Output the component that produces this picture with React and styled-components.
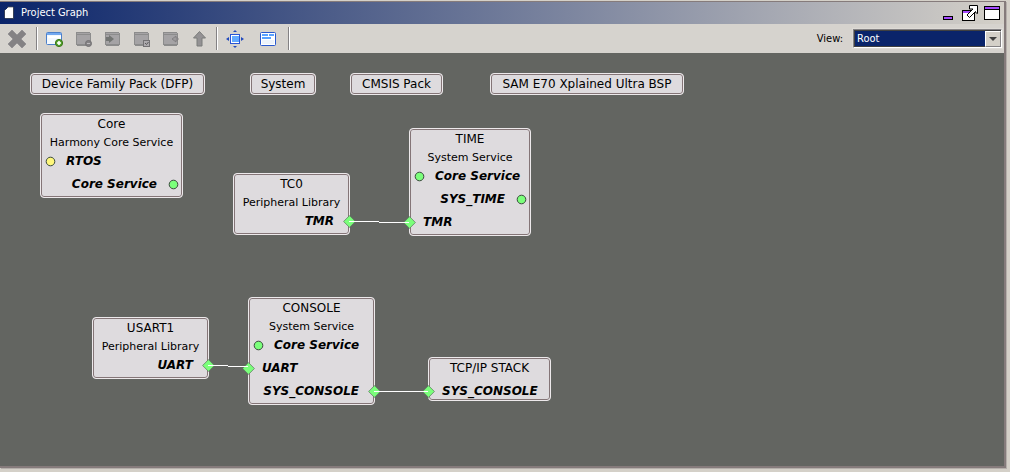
import React from "react";
import styled, { createGlobalStyle } from "styled-components";

const Global = createGlobalStyle`
  * { box-sizing: border-box; }
  body { margin: 0; background: #d4d0c8; }
`;

const ui = `"DejaVu Sans Condensed", "Liberation Sans", sans-serif`;
const node = `"DejaVu Sans", "Liberation Sans", sans-serif`;

const Frame = styled.main`
  display: flex;
  flex-direction: column;
  min-height: 100vh;
  padding: 1px 4px 4px 0;
  background: #d4d0c8;
  font-family: ${ui};
`;

const Panel = styled.section`
  flex: 1;
  display: flex;
  flex-direction: column;
  border: solid #857b7b;
  border-width: 1px 2px 2px 0;
  box-shadow: 1px 1px 0 #b5afab;
`;

const TitleBar = styled.header`
  display: flex;
  align-items: center;
  height: 22px;
  padding: 0 4px;
  background: linear-gradient(90deg, #0a246a, #d4d0c8);
`;

const Title = styled.h1`
  flex: 1;
  margin: 0 0 0 7px;
  color: #fff;
  font-size: 11px;
  font-weight: 400;
  line-height: 20px;
`;

const WindowButton = styled.button`
  display: flex;
  margin-left: ${(p) => p.$gap || 0}px;
  padding: 0;
  border: 0;
  background: none;
`;

const ToolBar = styled.div`
  display: flex;
  align-items: center;
  height: 29px;
  background: #d6d3ce;
`;

const ToolButton = styled.button`
  display: flex;
  align-items: center;
  justify-content: center;
  width: ${(p) => p.$width || 29}px;
  height: 25px;
  padding: 0;
  border: 0;
  background: none;
`;

const Separator = styled.span`
  width: 2px;
  height: 23px;
  margin: 0 2px;
  border-left: 1px solid #848284;
  border-right: 1px solid #fff;
`;

const ViewLabel = styled.label`
  margin-left: auto;
  margin-right: 10px;
  color: #000;
  font-size: 11px;
`;

const SelectBox = styled.div`
  display: flex;
  width: 149px;
  height: 19px;
  margin-right: 2px;
  padding: 1px;
  border: 1px solid;
  border-color: #848284 #fff #fff #848284;
  background: #fff;
  outline: 1px solid #dedbd6;
  position: relative;
`;

const ViewSelect = styled.select`
  flex: 1;
  appearance: none;
  padding: 0 2px;
  border: 0;
  border-radius: 0;
  outline: 1px solid #404040;
  background: #0a246a;
  color: #fff;
  font-family: ${ui};
  font-size: 11px;
`;

const Arrow = styled.span`
  position: absolute;
  right: 0;
  top: 1px;
  bottom: 0;
  width: 16px;
  display: flex;
  align-items: center;
  justify-content: center;
  border: 1px solid;
  border-color: #fff #848284 #848284 #fff;
  background: #d4d0c8;
  pointer-events: none;
`;

const Canvas = styled.div`
  position: relative;
  flex: 1;
  min-height: 412px;
  background: #636561;
  font-family: ${node};
  color: #000;
`;

const Wires = styled.svg`
  position: absolute;
  inset: 0;
  z-index: 2;
  width: 100%;
  height: 100%;
  pointer-events: none;
`;

const Box = styled.article`
  position: absolute;
  left: ${(p) => p.$x}px;
  top: ${(p) => p.$y}px;
  width: ${(p) => p.$w}px;
  border: 1px solid #ede9eb;
  border-radius: 4px;
  background: #dedbde;
  box-shadow: inset 0 0 0 1px #847577;
  padding: 1px;
`;

const BoxTitle = styled.h2`
  margin: 0;
  font-size: 12px;
  font-weight: 400;
  line-height: 18px;
  text-align: center;
  white-space: nowrap;
`;

const BoxKind = styled.p`
  margin: 0;
  font-size: 11px;
  line-height: 20px;
  text-align: center;
  white-space: nowrap;
`;

const Ports = styled.ul`
  display: flex;
  flex-direction: column;
  gap: 7px;
  margin: 0;
  padding: ${(p) => (p.$compact ? "6px 0 0" : "0 0 4px")};
  list-style: none;
`;

const Port = styled.li`
  display: flex;
  justify-content: ${(p) => (p.$out ? "flex-end" : "flex-start")};
  position: relative;
  padding: ${(p) => {
    const side = p.$round ? 24 : p.$out ? 14 : 12;
    return p.$out ? `0 ${side}px 0 0` : `0 0 0 ${side}px`;
  }};
  font-size: 12px;
  font-weight: 700;
  font-style: italic;
  line-height: 16px;
  white-space: nowrap;
`;

const Pin = styled.svg`
  position: absolute;
  top: ${(p) => (p.$round ? 3 : 2)}px;
  ${(p) => (p.$out ? "right" : "left")}: ${(p) => (p.$round ? (p.$out ? 2 : 3) : -8)}px;
  z-index: 1;
`;

const green = "#7bff7b";
const yellow = "#fff77b";

const packs = [
  { name: "Device Family Pack (DFP)", x: 30, y: 20, w: 175 },
  { name: "System", x: 250, y: 20, w: 66 },
  { name: "CMSIS Pack", x: 350, y: 20, w: 93 },
  { name: "SAM E70 Xplained Ultra BSP", x: 490, y: 20, w: 194 },
];

const components = [
  { name: "Core", kind: "Harmony Core Service", x: 40, y: 60, w: 143,
    ports: [{ name: "RTOS", round: true, fill: yellow }, { name: "Core Service", round: true, out: true }] },
  { name: "TC0", kind: "Peripheral Library", x: 233, y: 120, w: 117, ports: [{ name: "TMR", out: true }] },
  { name: "TIME", kind: "System Service", x: 409, y: 75, w: 122,
    ports: [{ name: "Core Service", round: true }, { name: "SYS_TIME", round: true, out: true }, { name: "TMR" }] },
  { name: "USART1", kind: "Peripheral Library", x: 92, y: 264, w: 117, ports: [{ name: "UART", out: true }] },
  { name: "CONSOLE", kind: "System Service", x: 248, y: 244, w: 127,
    ports: [{ name: "Core Service", round: true }, { name: "UART" }, { name: "SYS_CONSOLE", out: true }] },
  { name: "TCP/IP STACK", x: 428, y: 304, w: 123, ports: [{ name: "SYS_CONSOLE" }] },
];

const PinShape = ({ port }) =>
  port.round ? (
    <Pin $round $out={port.out} width="11" height="11" viewBox="0 0 11 11">
      <circle cx="5.5" cy="5.5" r="4.3" fill={port.fill || green} stroke="#39493c" />
    </Pin>
  ) : (
    <Pin $out={port.out} width="13" height="13" viewBox="0 0 13 13">
      <path d="M6.5.6 12.4 6.5 6.5 12.4.6 6.5z" fill={green} stroke="#58735a" strokeWidth=".7" />
    </Pin>
  );

const Component = ({ c }) => (
  <Box $x={c.x} $y={c.y} $w={c.w}>
    <BoxTitle>{c.name}</BoxTitle>
    {c.kind && <BoxKind>{c.kind}</BoxKind>}
    {c.ports && (
      <Ports $compact={!c.kind}>
        {c.ports.map((p) => (
          <Port key={p.name} $out={p.out} $round={p.round}>
            <PinShape port={p} />
            {p.name}
          </Port>
        ))}
      </Ports>
    )}
  </Box>
);

const Icon = ({ children, w = 18, h = 18 }) => (
  <svg width={w} height={h} viewBox={`0 0 ${w} ${h}`} fill="none" aria-hidden="true">
    {children}
  </svg>
);

const GrayWindow = () => (
  <g shapeRendering="crispEdges">
    <path d="M1 2h14v1h1v12h-1v1H2v-1H1z" fill="#8c8c8c" />
    <path d="M2 3h13v1H2zM2 5h13v9H2z" fill="#a5a3a5" />
  </g>
);

const CloseIcon = () => (
  <Icon w={20} h={20}>
    <path d="M1 5 5 1l5 5 5-5 4 4-5 5 5 5-4 4-5-5-5 5-4-4 5-5z" fill="#848284" stroke="#949294" />
  </Icon>
);

const AddIcon = () => (
  <Icon>
    <rect x=".5" y="2.5" width="15" height="12" rx="1" fill="#f3f8fd" stroke="#4b7fca" />
    <path d="M1 3h14v2H1z" fill="#72a8ef" />
    <path d="M2 6h13v2H2z" fill="#fff" />
    <circle cx="13" cy="13" r="3.6" fill="#55a52d" stroke="#397318" />
    <path d="M13 11v4M11 13h4" stroke="#fff" strokeWidth="1.6" />
  </Icon>
);

const RemoveIcon = () => (
  <Icon>
    <GrayWindow />
    <circle cx="13.5" cy="13.5" r="3" fill="#848284" stroke="#737173" />
    <path d="M12 13.5h3" stroke="#bdbabd" />
  </Icon>
);

const ImportIcon = () => (
  <Icon>
    <GrayWindow />
    <path d="M2 7h3V5l5 4-5 4v-2H2z" fill="#737573" />
  </Icon>
);

const CheckIcon = () => (
  <Icon>
    <GrayWindow />
    <rect x="10.5" y="10.5" width="6" height="6" fill="#adaaad" stroke="#737173" />
    <path d="m12 13 1.5 1.5L15.5 12" stroke="#5a595a" />
  </Icon>
);

const ExportIcon = () => (
  <Icon>
    <GrayWindow />
    <path d="m14 6-4 3 4 3v-2h2V8h-2z" fill="#9c9a9c" stroke="#7b797b" strokeWidth=".8" />
  </Icon>
);

const UpIcon = () => (
  <Icon>
    <path d="m8.500 1.500 6 6.500h-3.500v8H6V8H2.500z" fill="#949294" stroke="#7b7d7b" />
  </Icon>
);

const FitIcon = () => (
  <Icon>
    <rect x="4.5" y="4.5" width="9" height="9" fill="#fff" stroke="#2955d6" />
    <path d="M6 6h7v6H6z" fill="#63aaff" />
    <path d="m9 0 2 2H7zM9 18l2-2H7zM0 9l3-2v4zM18 9l-3-2v4z" fill="#2149bd" />
  </Icon>
);

const FormIcon = () => (
  <Icon>
    <rect x="1.5" y="2.5" width="15" height="13" rx="1" fill="#fff" stroke="#2959ce" />
    <path d="M3 4h6v2H3zM10 4h5v2h-5zM3 7h9v2H3z" fill="#5aa2ff" />
    <path d="M3 11h12M3 13h12" stroke="#dbe7f6" />
  </Icon>
);

const tools = [
  ["Add component", AddIcon],
  ["Remove component", RemoveIcon],
  ["Import", ImportIcon],
  ["Select", CheckIcon],
  ["Export", ExportIcon],
  ["Up one level", UpIcon],
];

export default function App() {
  return (
    <Frame>
      <Global />
      <Panel>
        <TitleBar>
          <Icon w={10} h={14}>
            <path d="M4 1h5v11H1V4h3z" fill="#fff" />
            <path d="M9.5 1v11.5H1M.5 12V4M1 3.5h2.5V1H9" stroke="#4a4d52" strokeWidth=".7" />
            <path d="M2 3h1V2h1v2H2z" fill="#fff" />
          </Icon>
          <Title>Project Graph</Title>
          <WindowButton aria-label="Minimize">
            <Icon w={10} h={16}>
              <rect x=".5" y="11.5" width="9" height="3" fill="#a54aff" stroke="#000" />
            </Icon>
          </WindowButton>
          <WindowButton $gap={9} aria-label="Float">
            <Icon w={17} h={18}>
              <rect x=".5" y="6.5" width="12" height="10" fill="#fff" stroke="#000" />
              <path d="M1 7h11v2H1z" fill="#a54aff" />
              <path d="M7.500 1.500h8v8l-2-1v-1l-6 6-2.500-2.500 6-6H7.500z" fill="#fff" stroke="#000" />
            </Icon>
          </WindowButton>
          <WindowButton $gap={5} aria-label="Maximize">
            <Icon w={16} h={16}>
              <g shapeRendering="crispEdges">
                <path d="M0 1h16v14H0z" fill="#000" />
                <path d="M1 2h14v2H1z" fill="#a54aff" />
                <path d="M1 5h14v9H1z" fill="#fff" />
              </g>
            </Icon>
          </WindowButton>
        </TitleBar>

        <ToolBar>
          <ToolButton $width={34} aria-label="Delete">
            <CloseIcon />
          </ToolButton>
          <Separator />
          {tools.map(([name, Glyph]) => (
            <ToolButton key={name} aria-label={name}>
              <Glyph />
            </ToolButton>
          ))}
          <Separator />
          <ToolButton $width={30} aria-label="Fit to window">
            <FitIcon />
          </ToolButton>
          <ToolButton $width={36} aria-label="Properties">
            <FormIcon />
          </ToolButton>
          <Separator />
          <ViewLabel htmlFor="view">View:</ViewLabel>
          <SelectBox>
            <ViewSelect id="view" defaultValue="Root">
              <option>Root</option>
            </ViewSelect>
            <Arrow>
              <Icon w={8} h={4}>
                <path d="M0 0h8L4 4z" fill="#404040" />
              </Icon>
            </Arrow>
          </SelectBox>
        </ToolBar>

        <Canvas>
          {packs.map((c) => (
            <Component key={c.name} c={c} />
          ))}
          {components.map((c) => (
            <Component key={c.name} c={c} />
          ))}
          <Wires shapeRendering="crispEdges" stroke="#fff">
            <path d="M349 168.500H379M379 169.500H409M208 312.500H228M228 313.500H248M374 338.500H428" />
          </Wires>
        </Canvas>
      </Panel>
    </Frame>
  );
}
